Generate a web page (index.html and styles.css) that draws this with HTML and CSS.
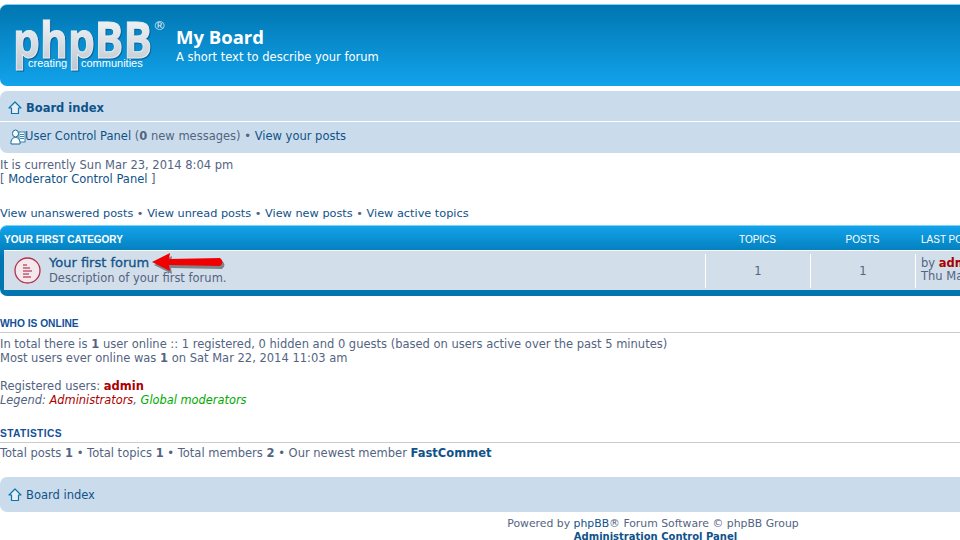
FILE: index.html
```html
<!DOCTYPE html>
<html lang="en">
<head>
    <meta charset="UTF-8">
    <title>My Board - Index page</title>
    <link rel="stylesheet" href="styles.css">
</head>
<body>
    <div class="wrap">
        <div class="headerbar">
            <svg class="logo" width="152" height="60" viewBox="0 0 152 60">
                <defs>
                    <linearGradient id="logofill" x1="0" y1="0" x2="0" y2="1">
                        <stop offset="0" stop-color="#ffffff"/>
                        <stop offset="1" stop-color="#b9c4cd"/>
                    </linearGradient>
                </defs>
                <text class="logo-big" x="-1" y="38" textLength="139" lengthAdjust="spacingAndGlyphs">phpBB</text>
                <text class="logo-reg" x="139" y="10">®</text>
                <text class="logo-small" x="14" y="47">creating</text>
                <text class="logo-small" x="67" y="47">communities</text>
            </svg>
            <div class="site-desc">
                <h1>My Board</h1>
                <p>A short text to describe your forum</p>
            </div>
        </div>

        <div class="navbar">
            <div class="nav-row nav-top">
                <svg class="icon" width="14" height="14" viewBox="0 0 14 14"><path d="M7 1 L13 7 H10.500 V12.500 H3.500 V7 H1 Z" fill="#e6eef3" stroke="#0a75b0" stroke-width="1.200" stroke-linejoin="round"/></svg>
                <a class="nav-strong" href="#">Board index</a>
            </div>
            <div class="nav-row nav-bottom">
                <svg class="icon-ucp" width="16" height="16" viewBox="0 0 16 16"><rect x="9" y="3" width="6" height="10" fill="#fff" stroke="#0a6aa0" stroke-width="0.800"/><path d="M10 5.500h4M10 7.500h4M10 9.500h4" stroke="#0a6aa0" stroke-width="0.800"/><ellipse cx="5.500" cy="4.500" rx="3" ry="3.500" fill="#fff" stroke="#0a6aa0"/><path d="M1 15 C0.500 10.500 3 8.500 5.500 8.500 S10.500 10.500 10 15 Z" fill="#fff" stroke="#0a6aa0"/></svg>
                <span><a href="#">User Control Panel</a> (<b>0</b> new messages) • <a href="#">View your posts</a></span>
            </div>
        </div>

        <p class="time">It is currently Sun Mar 23, 2014 8:04 pm<br>[ <a href="#">Moderator Control Panel</a> ]</p>

        <p class="search-links"><a href="#">View unanswered posts</a> • <a href="#">View unread posts</a> • <a href="#">View new posts</a> • <a href="#">View active topics</a></p>

        <div class="forabg">
            <div class="cat-head">
                <div class="col-name">Your first category</div>
                <div class="col-num">Topics</div>
                <div class="col-num">Posts</div>
                <div class="col-last">Last post</div>
            </div>
            <div class="forum-row">
                <div class="col-name forum-cell">
                    <svg class="forum-icon" width="27" height="27" viewBox="0 0 27 27">
                        <circle cx="13.500" cy="13.500" r="12.500" fill="#f3e9ec" stroke="#b5304f" stroke-width="1.300"/>
                        <path d="M9 8h4M9 11h7M9 14h9M9 17h6M9 20h8" stroke="#aa1436" stroke-width="1.200"/>
                    </svg>
                    <div class="forum-text">
                        <a class="forum-title" href="#">Your first forum</a>
                        <div class="forum-desc">Description of your first forum.</div>
                        <svg class="arrow" width="80" height="24" viewBox="0 0 80 24">
                            <path d="M2 12 L20 3 L19 9 L70 8 Q75 12 70 16 L19 15 L20 21 Z" fill="#3a3a3a" opacity="0.550" transform="translate(2 2)"/>
                            <path d="M2 11 L20 2 L19 8 L70 7 Q75 11 70 15 L19 14 L20 20 Z" fill="#f00000"/>
                        </svg>
                    </div>
                </div>
                <div class="col-num num-cell">1</div>
                <div class="col-num num-cell">1</div>
                <div class="col-last last-cell">by <a class="admin" href="#">admin</a><br>Thu Mar 20, 2014 10:24 am</div>
            </div>
        </div>

        <h3>Who is online</h3>
        <p class="block">In total there is <b>1</b> user online :: 1 registered, 0 hidden and 0 guests (based on users active over the past 5 minutes)<br>Most users ever online was <b>1</b> on Sat Mar 22, 2014 11:03 am</p>
        <p class="block users">Registered users: <a class="admin" href="#">admin</a><br><em>Legend: <a class="red" href="#">Administrators</a>, <a class="green" href="#">Global moderators</a></em></p>

        <h3 class="stats-head">Statistics</h3>
        <p class="block stats">Total posts <b>1</b> • Total topics <b>1</b> • Total members <b>2</b> • Our newest member <a class="newest" href="#">FastCommet</a></p>

        <div class="navbar foot-nav">
            <svg class="icon" width="14" height="14" viewBox="0 0 14 14"><path d="M7 1 L13 7 H10.500 V12.500 H3.500 V7 H1 Z" fill="#e6eef3" stroke="#0a75b0" stroke-width="1.200" stroke-linejoin="round"/></svg>
            <a href="#">Board index</a>
        </div>

        <div class="copyright">Powered by <a href="#">phpBB</a>® Forum Software © phpBB Group<br><a class="acp" href="#">Administration Control Panel</a></div>
    </div>
</body>
</html>
```

FILE: styles.css
```css
html, body {
    margin: 0;
    padding: 0;
    overflow: hidden;
    background: #fff;
}
body {
    width: 960px;
    height: 540px;
    font-family: "DejaVu Sans", Verdana, sans-serif;
    font-size: 11.500px;
    line-height: 14px;
    color: #536482;
}
a {
    color: #105289;
    text-decoration: none;
}
p {
    margin: 0;
}
.wrap {
    width: 1306px;
    padding-top: 4px;
}
.headerbar {
    display: flex;
    height: 81px;
    border-top: 1px solid #7fd0f5;
    border-radius: 7px;
    background: linear-gradient(#0076b1, #12a3eb);
    color: #fff;
}
.logo {
    margin: 15px 0 0 14px;
    flex: none;
    overflow: visible;
}
.logo-big {
    font-family: "Open Sans", sans-serif;
    font-size: 50px;
    font-weight: 700;
    fill: url(#logofill);
    stroke: #e8edf0;
    stroke-width: 1;
    filter: drop-shadow(1px 1px 0 #07609a);
}
.logo-reg {
    font-size: 13px;
    fill: #dfeaf2;
}
.logo-small {
    font-family: "Liberation Sans", sans-serif;
    font-size: 11px;
    fill: #fff;
}
.site-desc {
    margin: 20px 0 0 10px;
}
.site-desc h1 {
    margin: 0;
    font-family: "Open Sans", sans-serif;
    font-size: 18.500px;
    line-height: 24px;
    font-weight: 700;
}
.site-desc p {
    font-size: 11.500px;
    line-height: 16px;
}
.navbar {
    background: #cadceb;
    border-radius: 7px;
    margin-top: 5px;
    padding: 0 8px;
    height: 62px;
}
.nav-row {
    display: flex;
    align-items: center;
}
.nav-top {
    border-bottom: 1px solid #fff;
    margin: 0 -8px;
    padding: 3px 8px 0;
    gap: 4px;
    box-sizing: border-box;
    height: 31px;
}
.nav-bottom {
    height: 30px;
    margin-left: 2px;
}
.nav-bottom span {
    margin-top: -3px;
    margin-left: -1px;
}
.nav-strong {
    font-weight: 700;
}
.icon, .icon-ucp {
    flex: none;
}
.time {
    margin-top: 5px;
}
.search-links {
    margin-top: 21px;
    font-size: 11.300px;
}
.forabg {
    margin-top: 4px;
    background: linear-gradient(#12a3eb, #0076b1 32px, #0076b1);
    border-radius: 7px;
    border-top: 1px solid #7fd0f5;
    padding: 0 4px 6px;
    height: 71px;
    box-sizing: border-box;
    width: 1306px;
}
.cat-head {
    display: flex;
    height: 25px;
    align-items: center;
    color: #fff;
    font-family: "Liberation Sans", sans-serif;
    font-size: 10px;
    text-transform: uppercase;
    border-bottom: 1px solid #fff;
    box-sizing: border-box;
    padding-top: 4px;
}
.cat-head .col-name {
    font-weight: 700;
}
.col-name {
    width: 701px;
    flex: none;
}
.col-num {
    width: 105px;
    flex: none;
    text-align: center;
    box-sizing: border-box;
}
.col-last {
    flex: 1;
    padding-left: 5px;
}
.cat-head .col-last {
    padding-left: 6px;
}
.forum-row {
    display: flex;
    height: 39px;
    background: #d2deea;
    align-items: stretch;
}
.forum-cell {
    display: flex;
    align-items: center;
    padding-left: 10px;
    box-sizing: border-box;
}
.forum-icon {
    flex: none;
}
.forum-text {
    position: relative;
    margin-left: 8px;
}
.forum-title {
    display: block;
    position: relative;
    top: -1px;
    font-size: 13px;
    -webkit-text-stroke: 0.300px #105289;
    line-height: 15px;
    margin-top: -1px;
}
.forum-desc {
    line-height: 14px;
}
.arrow {
    position: absolute;
    left: 101px;
    top: -6px;
}
.num-cell, .last-cell {
    border-left: 1px solid #fff;
    margin: 3px 0 2px;
}
.num-cell {
    line-height: 35px;
    font-size: 11.500px;
}
.last-cell {
    line-height: 13px;
    padding-top: 3px;
}
.admin {
    color: #aa0000;
    font-weight: 700;
}
h3 {
    margin: 21px 0 0;
    height: 15px;
    border-bottom: 1px solid #ccc;
    font-family: "Liberation Sans", sans-serif;
    font-size: 10.200px;
    line-height: 13px;
    font-weight: 700;
    color: #115098;
    text-transform: uppercase;
}
.block {
    margin-top: 4px;
}
.stats {
    margin-top: 3px;
}
.users {
    margin-top: 14px;
}
.users em {
    font-size: 11.400px;
}
.red {
    color: #aa0000;
}
.green {
    color: #00aa00;
}
.stats-head {
    margin-top: 20px;
    letter-spacing: 0.400px;
}
.newest {
    font-weight: 700;
}
.foot-nav {
    display: flex;
    align-items: center;
    gap: 4px;
    height: 35px;
    margin-top: 17px;
}
.copyright {
    text-align: center;
    font-size: 10.850px;
    line-height: 13px;
    margin-top: 5px;
}
.acp {
    font-size: 10px;
    font-weight: 700;
    padding-left: 5px;
}
```
